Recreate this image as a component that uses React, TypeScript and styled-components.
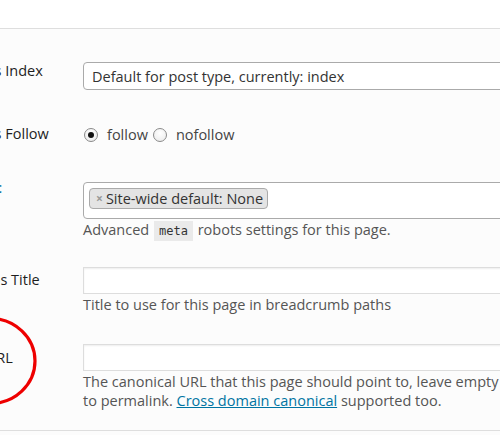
import React from "react";
import styled, { createGlobalStyle } from "styled-components";

const Global = createGlobalStyle`
  html, body { margin: 0; padding: 0; background: #fcfcfc; }
  body {
    width: 500px; height: 435px; overflow: hidden;
    font-family: "Open Sans", "Liberation Sans", sans-serif;
    font-size: 14.5px; color: #444;
  }
`;

const Page = styled.div`
  position: relative;
  width: 500px;
  height: 435px;
  overflow: hidden;
  background: #fcfcfc;
`;

const TopBar = styled.div`
  height: 28px;
  background: #fff;
  border-bottom: 1px solid #dedede;
`;

const Panel = styled.div`
  display: flex;
  flex-direction: column;
  padding-top: 33px;
  padding-bottom: 20px;
  border-bottom: 1px solid #dedede;
`;

const Row = styled.div<{ $mt: number }>`
  display: grid;
  grid-template-columns: 167px 425px;
  margin-left: -84px;
  margin-top: ${(p) => p.$mt}px;
  align-items: start;
`;

const Label = styled.div<{ $dy: number; $dx?: number; $link?: boolean }>`
  white-space: nowrap;
  font-weight: 400;
  line-height: 20px;
  color: ${(p) => (p.$link ? "#0074a2" : "#1e1e1e")};
  margin-top: ${(p) => p.$dy}px;
  margin-left: ${(p) => p.$dx ?? 0}px;
`;

const Field = styled.div`
  display: flex;
  flex-direction: column;
`;

const Select = styled.div`
  box-sizing: border-box;
  height: 28px;
  display: flex;
  align-items: center;
  padding: 0 8px;
  background: #fff;
  border: 1px solid #aaa;
  border-radius: 4px;
  color: #333;
  white-space: nowrap;
`;

const RadioGroup = styled.div`
  display: flex;
  align-items: center;
  height: 20px;
  margin-left: 1px;
  color: #444;
`;

const RadioMark = styled.span<{ $checked?: boolean }>`
  box-sizing: border-box;
  width: 14px;
  height: 14px;
  border-radius: 50%;
  border: 1px solid #8a8a8a;
  background: radial-gradient(circle at 50% 35%, #fff 0%, #e9e9e9 100%);
  display: flex;
  align-items: center;
  justify-content: center;
  margin-right: 9px;
  &::after {
    content: "";
    width: 6px;
    height: 6px;
    border-radius: 50%;
    background: ${(p) => (p.$checked ? "#111" : "transparent")};
  }
`;

const RadioText = styled.span<{ $gap: number }>`
  margin-right: ${(p) => p.$gap}px;
  line-height: 20px;
`;

const MultiBox = styled.div`
  box-sizing: border-box;
  height: 37px;
  padding: 5px;
  background: #fff;
  border: 1px solid #aaa;
  border-radius: 4px;
  display: flex;
  align-items: flex-start;
`;

const Tag = styled.span`
  box-sizing: border-box;
  height: 21px;
  display: inline-flex;
  align-items: center;
  padding: 0 4px 0 6px;
  background: #e4e4e4;
  border: 1px solid #aaa;
  border-radius: 4px;
  color: #333;
  white-space: nowrap;
`;

const TagX = styled.span`
  color: #999;
  font-size: 12px;
  font-weight: 700;
  margin-right: 3px;
`;

const Desc = styled.div`
  color: #555;
  line-height: 19px;
  padding-top: 1px;
`;

const Code = styled.code`
  font-family: "DejaVu Sans Mono", "Liberation Mono", monospace;
  font-size: 12px;
  line-height: 12px;
  background: #eaeaea;
  padding: 3px 5px 3px;
  margin: 0 1px;
  color: #333;
`;

const TextInput = styled.div`
  box-sizing: border-box;
  height: 27px;
  background: #fff;
  border: 1px solid #ddd;
  box-shadow: inset 0 1px 2px rgba(0, 0, 0, 0.07);
`;

const Link = styled.a`
  color: #0074a2;
  text-decoration: underline;
`;

const Annotation = styled.svg`
  position: absolute;
  left: 0;
  top: 0;
  pointer-events: none;
`;

export default function App() {
  return (
    <Page>
      <Global />
      <TopBar />
      <Panel>
        <Row $mt={0}>
          <Label $dy={-1}>Meta Robots Index</Label>
          <Field>
            <Select>Default for post type, currently: index</Select>
          </Field>
        </Row>
        <Row $mt={35}>
          <Label $dy={-1}>Meta Robots Follow</Label>
          <Field>
            <RadioGroup>
              <RadioMark $checked />
              <RadioText $gap={5}>follow</RadioText>
              <RadioMark />
              <RadioText $gap={0}>nofollow</RadioText>
            </RadioGroup>
          </Field>
        </Row>
        <Row $mt={37}>
          <Label $dy={-4} $dx={-3} $link>Meta Robots:</Label>
          <Field>
            <MultiBox>
              <Tag>
                <TagX>×</TagX>Site-wide default: None
              </Tag>
            </MultiBox>
            <Desc>
              Advanced <Code>meta</Code> robots settings for this page.
            </Desc>
          </Field>
        </Row>
        <Row $mt={28}>
          <Label $dy={3}>Breadcrumbs Title</Label>
          <Field>
            <TextInput />
            <Desc>Title to use for this page in breadcrumb paths</Desc>
          </Field>
        </Row>
        <Row $mt={30}>
          <Label $dy={4}>Canonical URL</Label>
          <Field>
            <TextInput />
            <Desc>
              The canonical URL that this page should point to, leave empty to
              permalink. <Link href="#">Cross domain canonical</Link> supported
              too.
            </Desc>
          </Field>
        </Row>
      </Panel>
      <Annotation width="60" height="435" viewBox="0 0 60 435">
        <ellipse cx="-10" cy="361" rx="45" ry="42.5" fill="none" stroke="#ee0000" strokeWidth="3.2" />
      </Annotation>
    </Page>
  );
}
